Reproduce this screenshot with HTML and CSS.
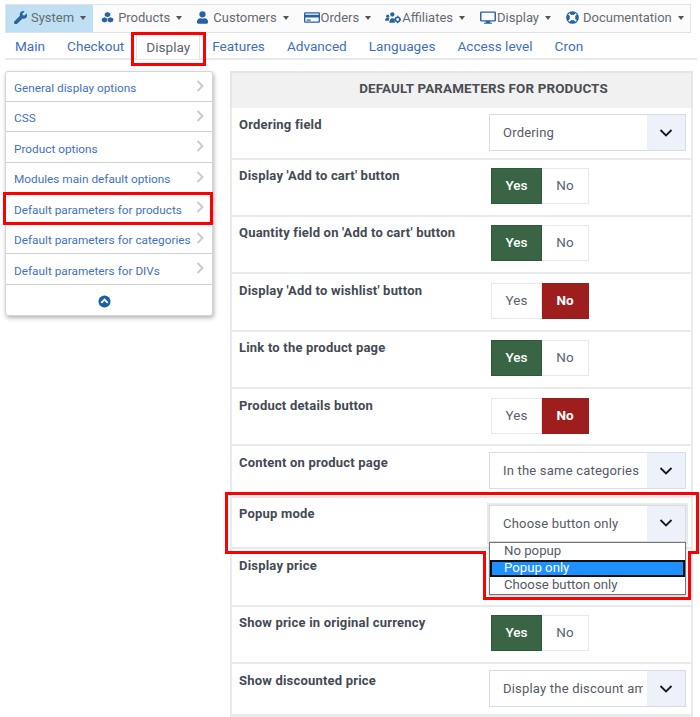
FILE: index.html
```html
<!DOCTYPE html>
<html lang="en">
<head>
<meta charset="utf-8">
<title>Display configuration</title>
<link rel="stylesheet" href="styles.css">
</head>
<body>
<div class="page">
  <nav class="topbar">
    <a class="top active"><svg class="ico" viewBox="0 0 512 512"><path d="M507 109c-2-9-14-12-20-5l-74 74-68-11-11-68 74-74c7-7 3-18-6-20-47-12-99 0-136 37-39 39-50 97-33 146L22 399c-29 29-29 76 0 105s76 29 105 0l210-210c49 17 107 6 146-33 37-37 49-90 24-152z"/></svg>System<i class="caret"></i></a>
    <a class="top"><svg class="ico" viewBox="0 0 24 24"><path d="M12 2l5 2.200v5L12 11.500 7 9.200v-5zM6.500 11.500l5 2.200v5l-5 2.300-5-2.300v-5zM17.500 11.500l5 2.200v5l-5 2.300-5-2.300v-5z"/></svg>Products<i class="caret"></i></a>
    <a class="top"><svg class="ico user" viewBox="0 0 448 512"><path d="M224 256a128 128 0 1 0 0-256 128 128 0 0 0 0 256zm90 32h-17a174 174 0 0 1-146 0h-17C60 288 0 348 0 422v42c0 27 21 48 48 48h352c27 0 48-21 48-48v-42c0-74-60-134-134-134z"/></svg>Customers<i class="caret"></i></a>
    <a class="top tight"><svg class="ico wide" viewBox="0 0 24 18"><path d="M2 1h20a2 2 0 0 1 2 2v12a2 2 0 0 1-2 2H2a2 2 0 0 1-2-2V3a2 2 0 0 1 2-2zm0 2v2h20V3zm0 6v6h20V9zm2 3h6v2H4z" fill-rule="evenodd"/></svg>Orders<i class="caret"></i></a>
    <a class="top"><svg class="ico wide" viewBox="0 0 24 18"><circle cx="4" cy="7" r="2.400"/><circle cx="11" cy="4.500" r="3.200"/><path d="M0 14c0-3 1.500-4.500 4-4.500 1 0 2 .3 2.500 1L5.500 14zM6.500 17c0-4 2-7 5-7 1.500 0 2.500.5 3.200 1.500-.8 2 .3 4.500.3 5.500z"/><circle cx="19" cy="12" r="3.300" fill="none" stroke="currentColor" stroke-width="2.400"/><path d="M18 6.500h2v2h-2zM18 15.500h2v2h-2zM13.500 11h2v2h-2zM22.500 11h1.500v2h-1.500z"/></svg>Affiliates<i class="caret"></i></a>
    <a class="top"><svg class="ico wide tall" viewBox="0 0 24 20"><path d="M2 1h20a2 2 0 0 1 2 2v11a2 2 0 0 1-2 2h-7l.6 2H18v1.500H6V18h2.400l.6-2H2a2 2 0 0 1-2-2V3a2 2 0 0 1 2-2zm.2 2v11h19.600V3z" fill-rule="evenodd"/></svg>Display<i class="caret"></i></a>
    <a class="top"><svg class="ico" viewBox="0 0 24 24"><circle cx="12" cy="12" r="8.500" fill="none" stroke="currentColor" stroke-width="6.500"/><path d="M4 6.500L6.500 4l4 4.500-2 2zM20 6.500L17.500 4l-4 4.500 2 2zM4 17.500L6.500 20l4-4.500-2-2zM20 17.500L17.500 20l-4-4.500 2-2z" fill="#fff"/></svg>Documentation<i class="caret"></i></a>
  </nav>

  <div class="tabs">
    <a class="tab">Main</a>
    <a class="tab">Checkout</a>
    <a class="tab current">Display</a>
    <a class="tab">Features</a>
    <a class="tab">Advanced</a>
    <a class="tab">Languages</a>
    <a class="tab">Access level</a>
    <a class="tab">Cron</a>
  </div>

  <div class="columns">
    <aside class="side">
      <a class="side-item">General display options<svg class="chev" viewBox="0 0 10 16"><path d="M2.500 3l5 5-5 5"/></svg></a>
      <a class="side-item">CSS<svg class="chev" viewBox="0 0 10 16"><path d="M2.500 3l5 5-5 5"/></svg></a>
      <a class="side-item">Product options<svg class="chev" viewBox="0 0 10 16"><path d="M2.500 3l5 5-5 5"/></svg></a>
      <a class="side-item">Modules main default options<svg class="chev" viewBox="0 0 10 16"><path d="M2.500 3l5 5-5 5"/></svg></a>
      <a class="side-item">Default parameters for products<svg class="chev" viewBox="0 0 10 16"><path d="M2.500 3l5 5-5 5"/></svg></a>
      <a class="side-item">Default parameters for categories<svg class="chev" viewBox="0 0 10 16"><path d="M2.500 3l5 5-5 5"/></svg></a>
      <a class="side-item">Default parameters for DIVs<svg class="chev" viewBox="0 0 10 16"><path d="M2.500 3l5 5-5 5"/></svg></a>
      <div class="side-foot"><svg class="up" viewBox="0 0 14 14"><circle cx="7" cy="7" r="6.500"/><path d="M3.500 8.500L7 5l3.500 3.500"/></svg></div>
    </aside>

    <section class="panel">
      <h2 class="panel-head">DEFAULT PARAMETERS FOR PRODUCTS</h2>

      <div class="row short"><div class="label">Ordering field</div><div class="select"><span class="value">Ordering</span><span class="arrow"><svg viewBox="0 0 14 8"><path d="M1.500 1l5.500 5.500L12.500 1"/></svg></span></div></div>
      <div class="row"><div class="label">Display 'Add to cart' button</div><div class="toggle"><span class="opt yes">Yes</span><span class="opt">No</span></div></div>
      <div class="row"><div class="label">Quantity field on 'Add to cart' button</div><div class="toggle"><span class="opt yes">Yes</span><span class="opt">No</span></div></div>
      <div class="row"><div class="label">Display 'Add to wishlist' button</div><div class="toggle"><span class="opt">Yes</span><span class="opt no">No</span></div></div>
      <div class="row"><div class="label">Link to the product page</div><div class="toggle"><span class="opt yes">Yes</span><span class="opt">No</span></div></div>
      <div class="row"><div class="label">Product details button</div><div class="toggle"><span class="opt">Yes</span><span class="opt no">No</span></div></div>
      <div class="row short"><div class="label">Content on product page</div><div class="select"><span class="value">In the same categories</span><span class="arrow"><svg viewBox="0 0 14 8"><path d="M1.500 1l5.500 5.500L12.500 1"/></svg></span></div></div>
      <div class="row short"><div class="label">Popup mode</div><div class="select focus"><span class="value">Choose button only</span><span class="arrow"><svg viewBox="0 0 14 8"><path d="M1.500 1l5.500 5.500L12.500 1"/></svg></span></div></div>
      <div class="row"><div class="label">Display price</div></div>
      <div class="row"><div class="label">Show price in original currency</div><div class="toggle"><span class="opt yes">Yes</span><span class="opt">No</span></div></div>
      <div class="row short"><div class="label">Show discounted price</div><div class="select"><span class="value">Display the discount amount</span><span class="arrow"><svg viewBox="0 0 14 8"><path d="M1.500 1l5.500 5.500L12.500 1"/></svg></span></div></div>
    </section>
  </div>

  <div class="mark mark-tab"></div>
  <div class="mark mark-side"></div>
  <div class="mark mark-row"></div>
  <div class="mark mark-list"></div>

  <ul class="listbox">
    <li>No popup</li>
    <li class="picked">Popup only</li>
    <li>Choose button only</li>
  </ul>
</div>
</body>
</html>
```
FILE: styles.css
```css
* { box-sizing: border-box; }
html, body { margin: 0; height: 717px; overflow: hidden; background: #fff; }
body { font-family: Roboto, "Liberation Sans", sans-serif; color: #4a4f57; }
.page { position: relative; width: 700px; height: 717px; padding: 4px 6px 0 5px; overflow: hidden; }

.topbar { display: flex; height: 29px; width: 686px; border: 1px solid #e2e3e5; background: #fbfbfb; }
.top { display: flex; align-items: center; padding: 0 7px 2px 8px; font-size: 13px; color: #666b72; white-space: nowrap; }
.top.active { background: #bfe0f3; }
.top.tight { padding-right: 6px; }
.ico { width: 13px; height: 13px; margin-right: 4px; fill: #25649f; color: #25649f; flex: none; }
.ico.user { width: 11px; margin-right: 5px; }
.ico.wide { width: 16px; margin-right: 1px; }
.ico.tall { height: 15px; }
.caret { width: 0; height: 0; margin-left: 6px; border: 3.500px solid transparent; border-top: 4px solid #555; border-bottom: 0; }

.tabs { display: flex; height: 27px; margin-right: -3px; border-bottom: 2px solid #e9eaec; }
.tab { padding: 0 10px; line-height: 26px; font-size: 13.600px; color: #3f6fbe; white-space: nowrap; margin-right: 2px; }
.tab.current { color: #5b6270; background: #fff; border: 1px solid #e3e4e6; border-bottom: 0; padding: 0 9px; line-height: 24px; margin-top: 1px; height: 25px; }

.columns { display: flex; align-items: flex-start; margin-top: 11px; }
.side { width: 208px; flex: none; height: 245px; border: 1px solid #d4d5d7; border-radius: 3px; box-shadow: 1px 2px 4px rgba(0,0,0,.3); background: #fff; display: flex; flex-direction: column; }
.side-item { height: 30.500px; flex: none; display: flex; align-items: center; justify-content: space-between; padding: 4px 7px 0 8px; border-bottom: 1px solid #cfd0d2; font-size: 11.800px; color: #4272bd; white-space: nowrap; }
.side-item:first-child { height: 29.500px; }
.chev { width: 10px; height: 16px; margin-top: -5px; fill: none; stroke: #c9cbce; stroke-width: 2; flex: none; }
.side-foot { flex: 1; display: flex; align-items: center; justify-content: center; padding: 3px 10px 0 0; }
.up { width: 13px; height: 13px; }
.up circle { fill: #195fa8; }
.up path { fill: none; stroke: #fff; stroke-width: 2.200; }

.panel { width: 463px; margin-left: 17px; border: 2px solid #e9eaec; border-top: 0; flex: none; }
.panel-head { margin: 0 -2px; height: 37px; padding-left: 44px; background: #f1f1f1; border: 2px solid #e6e6e6; border-bottom: 0; text-align: center; font-size: 13.400px; font-weight: 700; line-height: 32px; color: #4a4d52; letter-spacing: .15px; }

.row { display: flex; justify-content: space-between; align-items: flex-start; height: 57.400px; padding: 6px 5px 0 7px; border-bottom: 2px solid #e9eaec; }
.row.short { height: 51.500px; }
.label { font-size: 13px; font-weight: 700; color: #444a53; line-height: 20px; letter-spacing: .2px; white-space: nowrap; margin-top: .5px; }

.select { display: flex; width: 197px; height: 37px; border: 1px solid #d8dce3; background: #fff; font-size: 13px; color: #555b65; flex: none; }
.value { width: 153px; margin-right: 4px; padding-left: 13px; line-height: 35px; white-space: nowrap; overflow: hidden; letter-spacing: .2px; }
.arrow { flex: 1; background: #edf2fa; display: flex; align-items: center; justify-content: center; }
.arrow svg { width: 14px; height: 8px; fill: none; stroke: #16181c; stroke-width: 1.800; }
.select.focus { box-shadow: 0 0 0 2px #e8e9eb; margin-top: 1px; }

.toggle { display: flex; margin-right: 97px; margin-top: 2.500px; height: 36px; flex: none; width: 98px; }
.opt { width: 51px; border: 1px solid #e4e7ec; text-align: center; font-size: 13.500px; line-height: 33px; color: #5b6270; background: #fff; }
.opt + .opt { border-left: 0; width: 47px; }
.opt.yes { background: #3a6544; color: #fff; font-weight: 500; border-color: #2f5a3a; }
.opt.no { background: #9e1e1e; color: #fff; font-weight: 700; border-color: #93221f; }

.listbox { position: absolute; left: 489px; top: 542px; width: 197px; height: 53px; margin: 0; padding: 0; list-style: none; background: #fff; border: 1px solid #767676; font-size: 13.200px; color: #555b65; box-shadow: 0 1px 2px rgba(0,0,0,.25); }
.listbox li { height: 17px; line-height: 16px; padding-left: 14px; }
.listbox li.picked { background: #1e90ff; color: #fff; outline: 2px solid #111; outline-offset: -2px; }

.mark { position: absolute; border: 3px solid #f00; pointer-events: none; }
.mark-tab { left: 131px; top: 32px; width: 75px; height: 34px; }
.mark-side { left: 3px; top: 192px; width: 210px; height: 33px; }
.mark-row { left: 225px; top: 492px; width: 474px; height: 62px; }
.mark-list { left: 483px; top: 551px; width: 208px; height: 49px; border-top: 0; background: #fff; }
```
